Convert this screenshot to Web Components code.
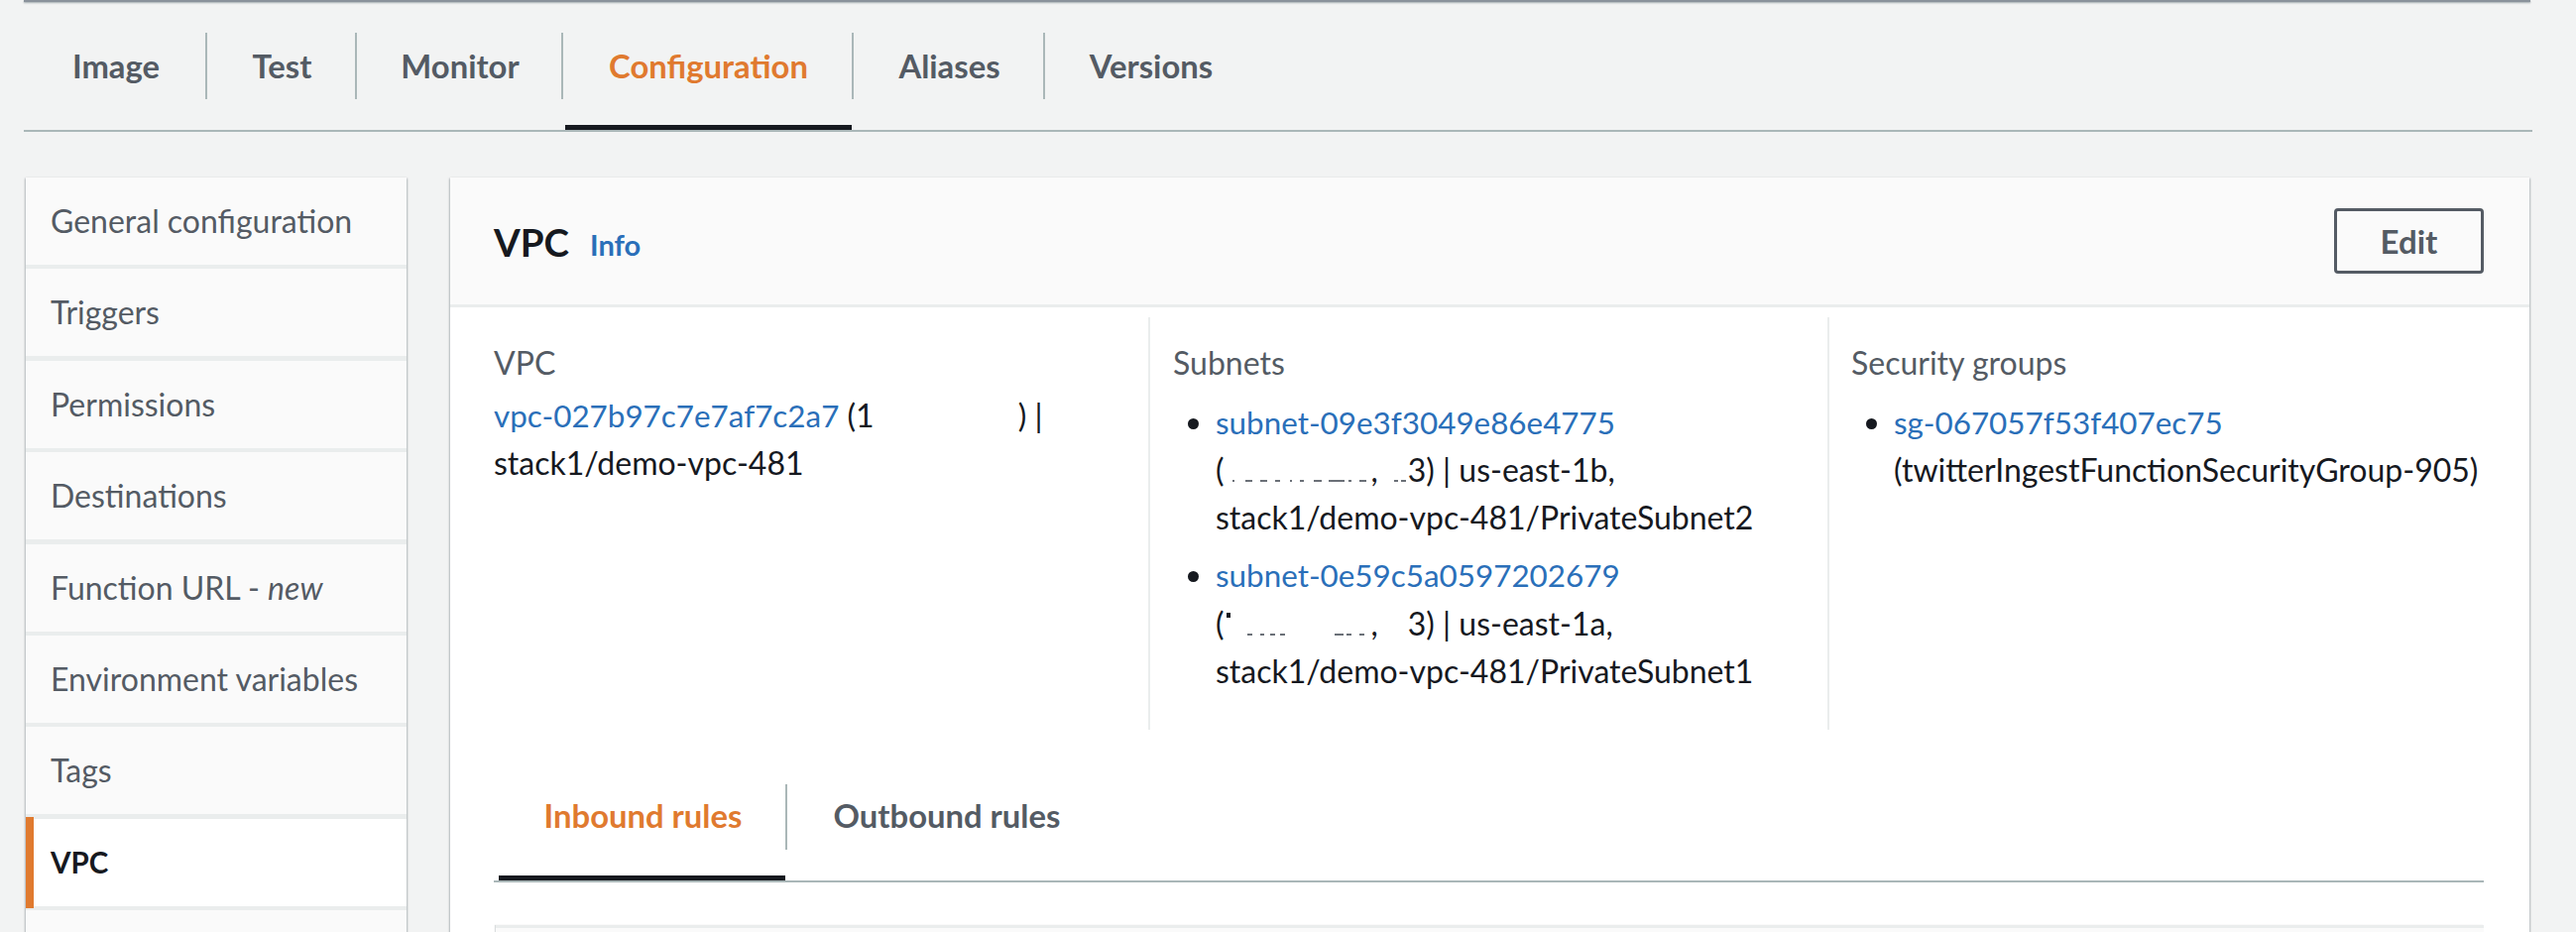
<!DOCTYPE html>
<html><head><meta charset="utf-8">
<style>
html,body{margin:0;background:#f2f3f3;height:940px;overflow:hidden}
body{font-family:"Lato","Noto Sans",sans-serif;color:#16191f;--ink:#16191f;--mute:#545b64;--link:#2a6fb9;--accent:#e07a2f;--line:#aab7b8}
</style></head><body>
<lambda-page></lambda-page>
<script>
class TabStrip extends HTMLElement{
  connectedCallback(){
    const items=JSON.parse(this.getAttribute('items'));
    const active=+this.getAttribute('active');
    this.attachShadow({mode:'open'}).innerHTML=`<style>
      :host{display:flex;height:var(--h);border-bottom:2px solid var(--line);font:700 32.8px/48px "Lato",sans-serif;color:var(--mute)}
      .tab{box-sizing:border-box;display:flex;align-items:center;justify-content:center;position:relative}
      .tab:not(:last-child)::after{content:"";position:absolute;right:-1px;top:var(--st);bottom:var(--sb);width:2px;background:var(--line)}
      .tab span{position:relative;top:var(--ty,0)}
      .on{color:var(--accent)}
      .on::before{content:"";position:absolute;left:var(--ul);right:1px;bottom:0;height:5px;background:var(--ink)}
    </style>`+items.map((t,i)=>`<div class="tab ${i==active?'on':''}" style="width:${t[1]}px;padding-left:${t[2]||2}px"><span>${t[0]}</span></div>`).join('');
  }
}
customElements.define('tab-strip',TabStrip);

class SideNav extends HTMLElement{
  connectedCallback(){
    const items=['General configuration','Triggers','Permissions','Destinations','Function URL - <i>new</i>','Environment variables','Tags','VPC','&nbsp;'];
    this.attachShadow({mode:'open'}).innerHTML=`<style>
      :host{display:block;width:384px;flex:none;box-shadow:0 1px 2px rgba(0,28,36,.3),1px 1px 2px rgba(0,28,36,.15),-1px 1px 2px rgba(0,28,36,.15);background:#eaeded}
      .row{height:88px;margin-bottom:4.4px;background:#fafafa;display:flex;align-items:center;padding-left:25px;box-sizing:border-box;font:400 32px/48px "Lato",sans-serif;color:var(--mute);position:relative}
      .on{background:#fff;color:var(--ink);font-weight:700;font-size:29.5px}
      .on::before{content:"";position:absolute;left:0;top:-2px;bottom:-2px;width:8px;background:var(--accent)}
    </style>`+items.map(t=>`<div class="row ${t=='VPC'?'on':''}"><span>${t}</span></div>`).join('');
  }
}
customElements.define('side-nav',SideNav);

// bits of text left over by the redaction in the source picture
class ScrapMarks extends HTMLElement{
  connectedCallback(){
    const w=+this.getAttribute('w');
    const bits=this.getAttribute('bits').split(' ').filter(Boolean).map(b=>b.split('-').map(Number));
    const tick=this.hasAttribute('tick')?'<rect x="2" y="3" width="4" height="5" fill="#16191f"/>':'';
    this.attachShadow({mode:'open'}).innerHTML=`<style>
      :host{display:inline-block;width:${w}px;height:26px;vertical-align:baseline}
      svg{display:block}
    </style>
    <svg width="${w}" height="26">${tick}${bits.map(b=>`<rect x="${b[0]}" y="24" width="${b[1]-b[0]}" height="2" fill="#6b7078"/>`).join('')}</svg>`;
  }
}
customElements.define('scrap-marks',ScrapMarks);

class VpcCard extends HTMLElement{
  connectedCallback(){
    this.attachShadow({mode:'open'}).innerHTML=`<style>
      :host{display:block;width:2097px;margin-left:44px;flex:none;background:#fff;box-shadow:0 1px 2px rgba(0,28,36,.3),1px 1px 2px rgba(0,28,36,.15),-1px 1px 2px rgba(0,28,36,.15);font:400 32px/48.4px "Lato",sans-serif}
      header{height:128px;background:#fafafa;border-bottom:3px solid #eaeded;display:flex;align-items:center;padding:0 46px 0 44px}
      h2{margin:2px 0 0;font:700 38.5px/48px "Lato",sans-serif;color:var(--ink)}
      .info{font:700 29px/48px "Lato",sans-serif;color:var(--link);margin:7px auto 0 21px}
      .edit{box-sizing:border-box;width:151px;height:66px;margin-top:-1px;border:3px solid var(--mute);border-radius:4px;display:flex;align-items:center;justify-content:center;font:700 33px/48px "Lato",sans-serif;color:var(--mute)}
      .cols{display:grid;grid-template-columns:704px 685px 1fr;height:416px;margin-top:10px}
      .col{padding:22px 0 0 44px;box-sizing:border-box}
      .col+.col{border-left:2px solid #eaeded;padding-left:23px}
      .col:last-child{padding-left:22px}
      .lab{color:var(--mute);margin-bottom:11.2px}
      .val{margin-top:-7px}
      a{color:var(--link);text-decoration:none;font-size:31.4px}
      ul{margin:0;padding:0 0 0 43px}
      li{margin-bottom:9.6px}
      .gap{display:inline-block}
      .tabs{margin:55px 46px 0 44px;--h:97px;--st:0;--sb:31px;--ty:-16.5px;--ul:5px}
      .nested{margin:43px 46px 0 46px;height:40px;background:#fafafa;border-top:3px solid #eaeded;box-shadow:-1px 0 1px rgba(0,28,36,.15)}
    </style>
    <header><h2>VPC</h2><span class="info">Info</span><div class="edit">Edit</div></header>
    <div class="cols">
      <div class="col"><div class="lab">VPC</div><div class="val"><a>vpc-027b97c7e7af7c2a7</a> (1<span class="gap" style="width:145px"></span>) |<br>stack1/demo-vpc-481</div></div>
      <div class="col"><div class="lab">Subnets</div><ul>
        <li><a>subnet-09e3f3049e86e4775</a><br>(<scrap-marks w="148" bits="8-10 21-28 36-43 51-56 66-68 76-80 90-98 105-121 125-128 136-143"></scrap-marks>,<scrap-marks w="30" bits="16-20 23-28"></scrap-marks>3) | us-east-1b,<br>stack1/demo-vpc-481/PrivateSubnet2</li>
        <li><a>subnet-0e59c5a0597202679</a><br>(<scrap-marks w="148" tick bits="23-28 36-40 46-51 56-61 111-120 123-128 136-141"></scrap-marks>,<scrap-marks w="30" bits=""></scrap-marks>3) | us-east-1a,<br>stack1/demo-vpc-481/PrivateSubnet1</li>
      </ul></div>
      <div class="col"><div class="lab">Security groups</div><ul>
        <li><a>sg-067057f53f407ec75</a><br>(twitterIngestFunctionSecurityGroup-905)</li>
      </ul></div>
    </div>
    <tab-strip class="tabs" active="0" items='[["Inbound rules",295,6],["Outbound rules",322]]'></tab-strip>
    <div class="nested"></div>`;
  }
}
customElements.define('vpc-card',VpcCard);

class LambdaPage extends HTMLElement{
  connectedCallback(){
    this.attachShadow({mode:'open'}).innerHTML=`<style>
      :host{display:block;height:940px;overflow:hidden}
      .top{height:2px;margin-left:24px;width:2528px;background:#8a929b;box-shadow:0 1px 2px rgba(0,28,36,.35)}
      .main{margin:0 0 0 24px;width:2530px;--h:129px;--st:31px;--sb:31px;--ty:0px;--ul:3px}
      .body{display:flex;margin:46px 0 0 26px}
    </style>
    <div class="top"></div>
    <tab-strip class="main" active="3" items='[["Image",184],["Test",151],["Monitor",208],["Configuration",293],["Aliases",193],["Versions",214]]'></tab-strip>
    <div class="body"><side-nav></side-nav><vpc-card></vpc-card></div>`;
  }
}
customElements.define('lambda-page',LambdaPage);
</script>
</body></html>
